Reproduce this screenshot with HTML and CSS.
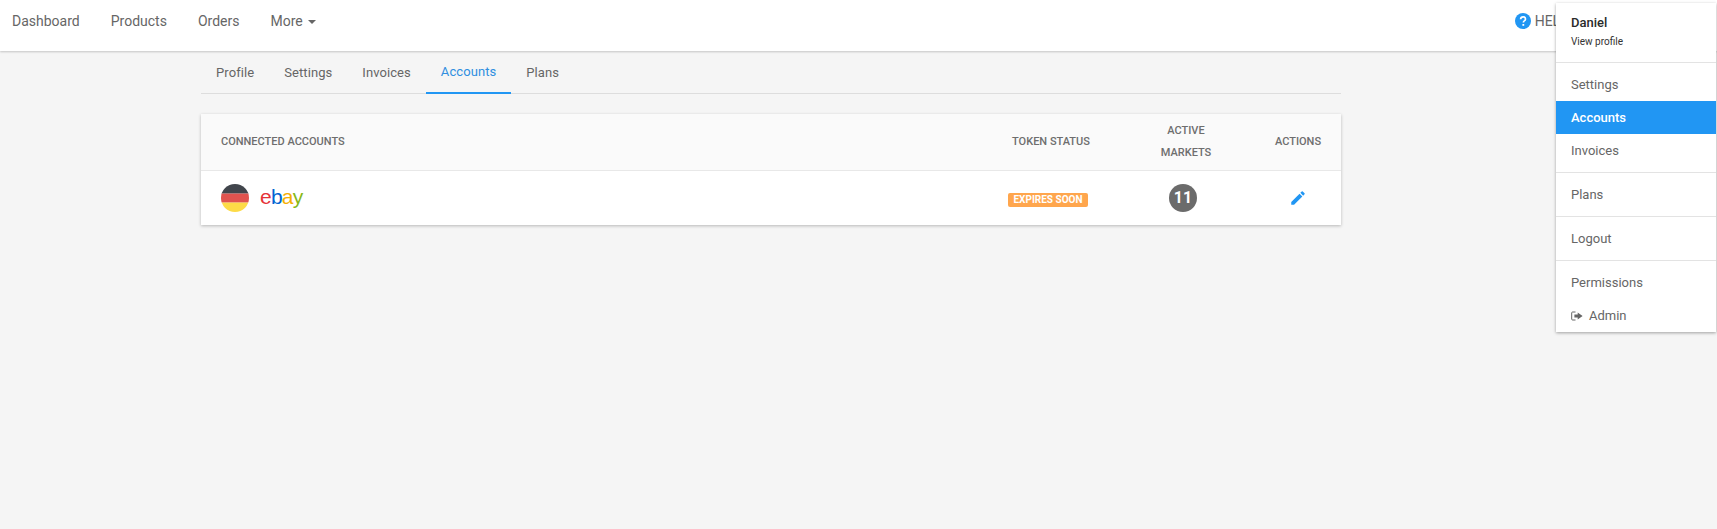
FILE: index.html
```html
<!DOCTYPE html>
<html lang="en">
<head>
<meta charset="utf-8">
<title>Accounts</title>
<link rel="stylesheet" href="styles.css">
</head>
<body>
<header class="topbar">
  <nav class="mainnav">
    <a class="mainnav-item">Dashboard</a>
    <a class="mainnav-item">Products</a>
    <a class="mainnav-item">Orders</a>
    <a class="mainnav-item">More <span class="caret"></span></a>
  </nav>
  <div class="help">
    <svg class="help-icon" viewBox="0 0 16 16" aria-hidden="true"><circle cx="8" cy="8" r="8" fill="#2196f3"/><path d="M5.6 6.2c.1-1.5 1.1-2.4 2.5-2.4s2.4.9 2.4 2.1c0 1-.5 1.5-1.2 2-.6.4-.9.7-.9 1.5v.2" fill="none" stroke="#fff" stroke-width="1.7"/><rect x="7.4" y="11" width="1.8" height="1.8" fill="#fff"/></svg>
    <span>HELP</span>
  </div>
</header>

<main class="content">
  <nav class="tabs">
    <a class="tab">Profile</a>
    <a class="tab">Settings</a>
    <a class="tab">Invoices</a>
    <a class="tab tab-active">Accounts</a>
    <a class="tab">Plans</a>
  </nav>

  <section class="card">
    <div class="row row-head">
      <div class="col col-name">Connected accounts</div>
      <div class="col col-token">Token status</div>
      <div class="col col-markets">Active<br>markets</div>
      <div class="col col-actions">Actions</div>
    </div>
    <div class="row row-body">
      <div class="col col-name account">
        <svg class="flag" viewBox="0 0 28 28" aria-hidden="true">
          <clipPath id="flagclip"><circle cx="14" cy="14" r="14"/></clipPath>
          <g clip-path="url(#flagclip)">
            <rect width="28" height="9.6" fill="#41454c"/>
            <rect y="9.6" width="28" height="9" fill="#e0534f"/>
            <rect y="18.6" width="28" height="9.4" fill="#fddb47"/>
          </g>
        </svg>
        <span class="ebay"><span class="e">e</span><span class="b">b</span><span class="a">a</span><span class="y">y</span></span>
      </div>
      <div class="col col-token cell-shift"><span class="badge">Expires soon</span></div>
      <div class="col col-markets cell-shift"><span class="count">11</span></div>
      <div class="col col-actions">
        <svg class="pencil" viewBox="0 0 24 24" aria-hidden="true"><path d="M3 17.25V21h3.75L17.81 9.94l-3.75-3.75L3 17.25zM20.71 7.04a1 1 0 0 0 0-1.41l-2.34-2.34a1 1 0 0 0-1.41 0l-1.83 1.83 3.75 3.75 1.83-1.83z" fill="#2196f3"/></svg>
      </div>
    </div>
  </section>
</main>

<aside class="menu">
  <div class="menu-user">
    <div class="menu-name">Daniel</div>
    <div class="menu-sub">View profile</div>
  </div>
  <div class="menu-group">
    <a class="menu-item">Settings</a>
    <a class="menu-item menu-item-active">Accounts</a>
    <a class="menu-item">Invoices</a>
  </div>
  <div class="menu-group">
    <a class="menu-item">Plans</a>
  </div>
  <div class="menu-group">
    <a class="menu-item">Logout</a>
  </div>
  <div class="menu-group menu-group-last">
    <a class="menu-item">Permissions</a>
    <a class="menu-item">
      <svg class="admin-icon" viewBox="0 0 12 10" aria-hidden="true"><path d="M4.5 1H1.6C1 1 .7 1.3.7 1.9v6.2c0 .6.3.9.9.9h2.9" fill="none" stroke="#666" stroke-width="1"/><path d="M3.4 3.6h3.3V1.4L11.6 5 6.7 8.6V6.4H3.4z" fill="#666"/></svg>Admin
    </a>
  </div>
</aside>
</body>
</html>
```

FILE: styles.css
```css
* { box-sizing: border-box; }

html, body { height: 100%; }

body {
  margin: 0;
  background: #f5f5f5;
  color: #666;
  font-family: Roboto, "Liberation Sans", sans-serif;
  font-size: 14px;
  overflow: hidden;
}

.topbar {
  display: flex;
  justify-content: space-between;
  height: 51px;
  padding: 0 148px 0 12px;
  background: #fff;
  box-shadow: 0 1px 2px rgba(0, 0, 0, .2);
}

.mainnav {
  display: flex;
  gap: 31px;
  align-items: center;
  height: 42px;
}

.mainnav-item { color: #666; white-space: nowrap; }

.caret {
  display: inline-block;
  width: 0;
  height: 0;
  margin-left: 2px;
  vertical-align: middle;
  border-top: 4px solid #666;
  border-left: 4px solid transparent;
  border-right: 4px solid transparent;
}

.help {
  display: flex;
  gap: 4px;
  align-items: center;
  height: 41px;
  color: #666;
}

.help-icon { width: 16px; height: 16px; }

.content {
  width: 1140px;
  margin-left: 201px;
}

.tabs {
  display: flex;
  height: 43px;
  border-bottom: 1px solid #ddd;
  font-size: 13px;
  letter-spacing: .08px;
}

.tab {
  display: flex;
  align-items: center;
  height: 43px;
  padding: 0 15px;
  color: #666;
}

.tab-active {
  color: #2f8fe0;
  border-bottom: 2px solid #2196f3;
}

.card {
  margin-top: 20px;
  background: #fff;
  box-shadow: 0 1px 3px rgba(0, 0, 0, .25);
}

.row { display: flex; align-items: center; }

.row-head {
  height: 57px;
  background: #fafafa;
  border-bottom: 1px solid #e8e8e8;
  font-size: 11px;
  font-weight: 500;
  line-height: 22px;
  text-transform: uppercase;
  color: #6e6e6e;
}

.row-body { height: 54px; }

.col { text-align: center; }

.col-name { flex: 1; padding-left: 20px; text-align: left; }
.col-token { width: 132px; }
.col-markets { width: 138px; }
.col-actions { width: 86px; }
.cell-shift { padding-right: 6px; }

.account { display: flex; align-items: center; gap: 11px; }

.flag { width: 28px; height: 28px; display: block; }

.ebay {
  margin-bottom: 2px;
  font-family: "Liberation Sans", sans-serif;
  font-size: 21px;
  line-height: 28px;
  letter-spacing: -.8px;
}

.e { color: #e53238; }
.b { color: #0064d2; }
.a { color: #f5af02; }
.y { color: #86b817; }

.badge {
  display: inline-block;
  height: 14px;
  padding: 0 5px;
  border-radius: 2px;
  background: #ffa64d;
  color: #fff;
  font-size: 10px;
  font-weight: 700;
  line-height: 14px;
  text-transform: uppercase;
  white-space: nowrap;
}

.count {
  display: inline-block;
  width: 28px;
  height: 28px;
  border-radius: 50%;
  background: #6b6b6b;
  color: #fff;
  font-size: 16px;
  font-weight: 700;
  line-height: 28px;
  text-align: center;
}

.pencil { width: 18px; height: 18px; display: block; margin: 0 auto; }

.menu {
  position: absolute;
  top: 3px;
  left: 1556px;
  width: 160px;
  background: #fff;
  box-shadow: 0 1px 3px rgba(0, 0, 0, .35);
}

.menu-user {
  height: 60px;
  padding: 11px 15px 0;
  border-bottom: 1px solid #e3e3e3;
}

.menu-name { color: #2a2a2a; font-size: 13px; font-weight: 500; line-height: 17px; }
.menu-sub { margin-top: 4px; color: #333; font-size: 10px; line-height: 14px; }

.menu-group {
  padding: 5px 0;
  border-bottom: 1px solid #e3e3e3;
}

.menu-group-last { padding-bottom: 0; border-bottom: 0; }

.menu-item {
  display: flex;
  align-items: center;
  height: 33px;
  padding: 0 15px;
  color: #666;
  font-size: 13px;
}

.menu-item-active {
  background: #2196f3;
  color: #fff;
  font-weight: 500;
}

.admin-icon { width: 12px; height: 10px; margin-right: 6px; }
```
